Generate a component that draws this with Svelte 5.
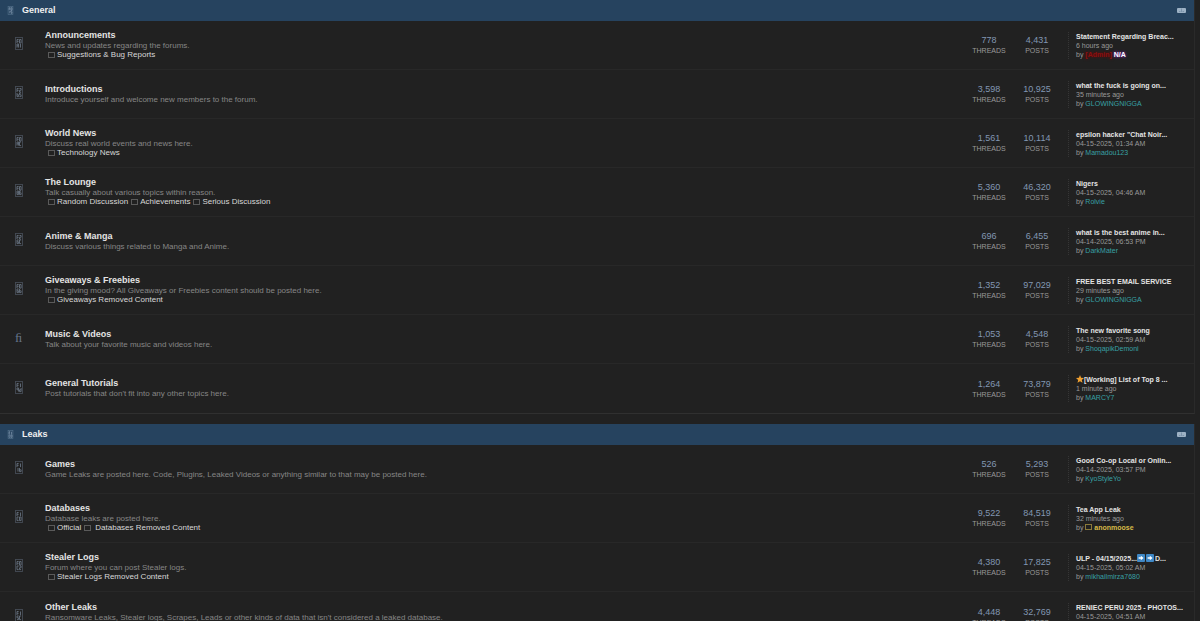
<script lang="ts">
  type Sub = { name: string; spaced?: boolean };
  type Poster = { name: string; kind?: 'admin' | 'gold' };
  type Forum = {
    name: string;
    about: string;
    icon: string;
    subs?: Sub[];
    threads: string;
    posts: string;
    last: { title: string; when: string; by: Poster; mark?: 'star' | 'arrows'; tail?: string };
  };
  type Category = { name: string; icon: string; forums: Forum[] };

  const categories: Category[] = [
    {
      name: 'General',
      icon: 'F015',
      forums: [
        {
          name: 'Announcements',
          about: 'News and updates regarding the forums.',
          icon: 'F0A1',
          subs: [{ name: 'Suggestions & Bug Reports' }],
          threads: '778',
          posts: '4,431',
          last: { title: 'Statement Regarding Breac...', when: '6 hours ago', by: { name: 'N/A', kind: 'admin' } },
        },
        {
          name: 'Introductions',
          about: 'Introduce yourself and welcome new members to the forum.',
          icon: 'F2B5',
          threads: '3,598',
          posts: '10,925',
          last: { title: 'what the fuck is going on...', when: '35 minutes ago', by: { name: 'GLOWINGNIGGA' } },
        },
        {
          name: 'World News',
          about: 'Discuss real world events and news here.',
          icon: 'F0AC',
          subs: [{ name: 'Technology News' }],
          threads: '1,561',
          posts: '10,114',
          last: { title: 'epsilon hacker "Chat Noir...', when: '04-15-2025, 01:34 AM', by: { name: 'Mamadou123' } },
        },
        {
          name: 'The Lounge',
          about: 'Talk casually about various topics within reason.',
          icon: 'F086',
          subs: [{ name: 'Random Discussion' }, { name: 'Achievements' }, { name: 'Serious Discussion' }],
          threads: '5,360',
          posts: '46,320',
          last: { title: 'Nigers', when: '04-15-2025, 04:46 AM', by: { name: 'Rolvie' } },
        },
        {
          name: 'Anime & Manga',
          about: 'Discuss various things related to Manga and Anime.',
          icon: 'F26C',
          threads: '696',
          posts: '6,455',
          last: { title: 'what is the best anime in...', when: '04-14-2025, 06:53 PM', by: { name: 'DarkMater' } },
        },
        {
          name: 'Giveaways & Freebies',
          about: 'In the giving mood? All Giveaways or Freebies content should be posted here.',
          icon: 'F06B',
          subs: [{ name: 'Giveaways Removed Content' }],
          threads: '1,352',
          posts: '97,029',
          last: { title: 'FREE BEST EMAIL SERVICE', when: '29 minutes ago', by: { name: 'GLOWINGNIGGA' } },
        },
        {
          name: 'Music & Videos',
          about: 'Talk about your favorite music and videos here.',
          icon: 'fi',
          threads: '1,053',
          posts: '4,548',
          last: { title: 'The new favorite song', when: '04-15-2025, 02:59 AM', by: { name: 'ShoqapikDemoni' } },
        },
        {
          name: 'General Tutorials',
          about: "Post tutorials that don't fit into any other topics here.",
          icon: 'F19D',
          threads: '1,264',
          posts: '73,879',
          last: { title: '[Working] List of Top 8 ...', when: '1 minute ago', by: { name: 'MARCY7' }, mark: 'star' },
        },
      ],
    },
    {
      name: 'Leaks',
      icon: 'F1C0',
      forums: [
        {
          name: 'Games',
          about: 'Game Leaks are posted here. Code, Plugins, Leaked Videos or anything similar to that may be posted here.',
          icon: 'F11B',
          threads: '526',
          posts: '5,293',
          last: { title: 'Good Co-op Local or Onlin...', when: '04-14-2025, 03:57 PM', by: { name: 'KyoStyleYo' } },
        },
        {
          name: 'Databases',
          about: 'Database leaks are posted here.',
          icon: 'F1C0',
          subs: [{ name: 'Official' }, { name: 'Databases Removed Content', spaced: true }],
          threads: '9,522',
          posts: '84,519',
          last: { title: 'Tea App Leak', when: '32 minutes ago', by: { name: 'anonmoose', kind: 'gold' } },
        },
        {
          name: 'Stealer Logs',
          about: 'Forum where you can post Stealer logs.',
          icon: 'F0C2',
          subs: [{ name: 'Stealer Logs Removed Content' }],
          threads: '4,380',
          posts: '17,825',
          last: {
            title: 'ULP - 04/15/2025...',
            when: '04-15-2025, 05:02 AM',
            by: { name: 'mikhailmirza7680' },
            mark: 'arrows',
            tail: 'D...',
          },
        },
        {
          name: 'Other Leaks',
          about: "Ransomware Leaks, Stealer logs, Scrapes, Leads or other kinds of data that isn't considered a leaked database.",
          icon: 'F15C',
          subs: [],
          threads: '4,448',
          posts: '32,769',
          last: { title: 'RENIEC PERU 2025 - PHOTOS...', when: '04-15-2025, 04:51 AM', by: { name: '' } },
        },
      ],
    },
  ];

  // Seven-segment strokes per hex digit, on a 2 x 4 cell
  const segments: Record<string, string> = {
    '0': 'M0 0H1.6V3.6H0Z',
    '1': 'M1 0V3.6',
    '2': 'M0 0H1.6V1.8H0V3.6H1.6',
    '5': 'M1.6 0H0V1.8H1.6V3.6H0',
    '6': 'M1.6 0H0V3.6H1.6V1.8H0',
    '8': 'M0 0H1.6V3.6H0ZM0 1.8H1.6',
    '9': 'M1.6 1.8H0V0H1.6V3.6',
    A: 'M0 3.6V0H1.6V3.6M0 1.8H1.6',
    B: 'M0 0V3.6H1.6V1.8H0',
    C: 'M1.6 0H0V3.6H1.6',
    D: 'M1.6 0V3.6H0V1.8H1.6',
    F: 'M1.6 0H0V3.6M0 1.8H1.6',
  };
</script>

{#snippet codeBox(code: string)}
  <svg class="code" viewBox="0 0 8 13" aria-hidden="true">
    <rect x="0.5" y="0.5" width="7" height="12" />
    {#each code as digit, i}
      <path d={segments[digit]} transform="translate({i % 2 ? 4.5 : 2} {i < 2 ? 2.5 : 7})" />
    {/each}
  </svg>
{/snippet}

{#snippet box()}
  <svg class="box" viewBox="0 0 7 6" aria-hidden="true"><rect x="0.5" y="0.5" width="6" height="5" /></svg>
{/snippet}

{#snippet arrow()}
  <svg class="arrow" viewBox="0 0 8 8" aria-hidden="true">
    <rect width="8" height="8" rx="1" />
    <path d="M1.6 3.2H3.8V1.7L6.6 4L3.8 6.3V4.8H1.6Z" />
  </svg>
{/snippet}

<main>
  {#each categories as category (category.name)}
    <section>
      <header>
        {@render codeBox(category.icon)}
        <h2><a href="#{category.name}">{category.name}</a></h2>
        <button aria-label="Collapse {category.name}">
          <svg viewBox="0 0 9 5" aria-hidden="true">
            <rect width="9" height="5" rx="1" />
            <path d="M4.5 0.5V4M2 3.5H3.5M5.5 3.5H7" />
          </svg>
        </button>
      </header>

      {#each category.forums as forum (forum.name)}
        <article>
          <div class="icon">
            {#if forum.icon === 'fi'}
              <span>ﬁ</span>
            {:else}
              {@render codeBox(forum.icon)}
            {/if}
          </div>
          <div class="info">
            <h3><a href="#{forum.name}">{forum.name}</a></h3>
            <p>{forum.about}</p>
            {#if forum.subs}
              <ul>
                {#each forum.subs as sub (sub.name)}
                  <li class:spaced={sub.spaced}>
                    {@render box()}<a href="#{sub.name}">{sub.name}</a>
                  </li>
                {/each}
              </ul>
            {/if}
          </div>
          <div class="stat"><b>{forum.threads}</b><span>THREADS</span></div>
          <div class="stat"><b>{forum.posts}</b><span>POSTS</span></div>
          <div class="last">
            <a class="topic" href="#{forum.name}-last">
              {#if forum.last.mark === 'star'}
                <svg class="star" viewBox="0 0 8 8" aria-hidden="true">
                  <path d="M4 0L5.1 2.7L8 3L5.8 4.9L6.5 7.8L4 6.2L1.5 7.8L2.2 4.9L0 3L2.9 2.7Z" />
                </svg>{/if}{forum.last.title}{#if forum.last.mark === 'arrows'}{@render arrow()}{@render arrow()}{/if}{forum.last.tail ?? ''}
            </a>
            <span>{forum.last.when}</span>
            <span>
              by
              {#if forum.last.by.kind === 'admin'}
                <a class="admin" href="#user"><i>[Admin]</i> {forum.last.by.name}</a>
              {:else if forum.last.by.kind === 'gold'}
                <a class="gold" href="#user">{@render box()} {forum.last.by.name}</a>
              {:else}
                <a class="user" href="#user">{forum.last.by.name}</a>
              {/if}
            </span>
          </div>
        </article>
      {/each}
    </section>
  {/each}
</main>

<style>
  :global(body) {
    background: #212121;
    color: #999;
    font-family: 'Liberation Sans', Arial, sans-serif;
    font-size: 8px;
    overflow: hidden;
  }
  a {
    color: inherit;
    text-decoration: none;
  }
  h2,
  h3,
  p,
  ul {
    margin: 0;
    padding: 0;
  }
  main {
    display: flex;
    flex-direction: column;
    gap: 10px;
    margin-right: 5px;
  }
  section {
    border-right: 1px solid #2a2a2a;
    border-bottom: 1px solid #303030;
  }
  header {
    display: flex;
    align-items: center;
    height: 21px;
    padding: 0 8px 0 7px;
    background: #26435f;
  }
  header .code {
    width: 7px;
    height: 9px;
    stroke: #8ea5bb;
  }
  header .code rect {
    stroke: #55718c;
  }
  h2 {
    flex: 1;
    margin-left: 8px;
    color: #f0f0f0;
    font-size: 9px;
    line-height: 11px;
  }
  button {
    display: flex;
    padding: 0;
    border: 0;
    background: none;
  }
  button svg {
    width: 9px;
    height: 5px;
    fill: #9db1c4;
    stroke: #7b93aa;
    stroke-width: 1;
  }
  button rect {
    stroke: none;
  }
  article {
    display: flex;
    align-items: center;
    box-sizing: border-box;
    height: 49px;
    border-bottom: 1px solid #282828;
  }
  article:last-child {
    border-bottom: 0;
  }
  .icon {
    display: flex;
    justify-content: center;
    width: 37px;
    margin-right: 8px;
    padding-bottom: 3px;
    color: #66758a;
    font: 13px/13px 'Liberation Serif', serif;
  }
  .code {
    width: 8px;
    height: 13px;
    fill: none;
    stroke: #66727f;
    stroke-width: 0.9;
  }
  .code rect {
    stroke: #454c55;
  }
  .info {
    flex: 1;
    min-width: 0;
  }
  h3 {
    color: #e4e4e4;
    font-size: 9px;
    line-height: 11px;
  }
  p {
    color: #868686;
    line-height: 10px;
    white-space: nowrap;
  }
  ul {
    display: flex;
    gap: 3px;
    min-height: 8px;
    padding: 0 0 1px 3px;
    list-style: none;
    line-height: 8px;
  }
  li {
    display: flex;
    align-items: center;
    color: #d8d8d8;
  }
  .box {
    width: 7px;
    height: 6px;
    margin-right: 2px;
    fill: none;
    stroke: #5a5a5a;
  }
  .spaced .box {
    margin-right: 4px;
  }
  .stat {
    display: flex;
    flex-direction: column;
    align-items: center;
    width: 48px;
    font-size: 7px;
    line-height: 9px;
  }
  .stat b {
    color: #8297b3;
    font-size: 9px;
    font-weight: normal;
    line-height: 11px;
  }
  .last {
    display: flex;
    flex-direction: column;
    box-sizing: border-box;
    width: 126px;
    margin-left: 7px;
    padding-left: 7px;
    border-left: 1px dotted #363636;
    font-size: 7px;
    line-height: 9px;
    white-space: nowrap;
  }
  .topic {
    color: #e4e4e4;
    font-weight: bold;
  }
  .user {
    color: #38a0a4;
  }
  .admin {
    color: #fff;
    font-weight: bold;
    text-shadow: 0 0 3px #a020f0;
  }
  .admin i {
    color: #8b0f0f;
    font-style: normal;
    text-shadow: 0 0 3px #700;
  }
  .gold {
    color: #d8bb48;
    font-weight: bold;
  }
  .gold .box {
    margin-right: 0;
    stroke: #8a7a3a;
  }
  .star,
  .arrow {
    width: 8px;
    height: 8px;
    vertical-align: -1px;
  }
  .star {
    fill: #f0a030;
  }
  .arrow {
    margin-right: 1px;
    fill: #3f88c5;
  }
  .arrow path {
    fill: #fff;
  }
</style>
